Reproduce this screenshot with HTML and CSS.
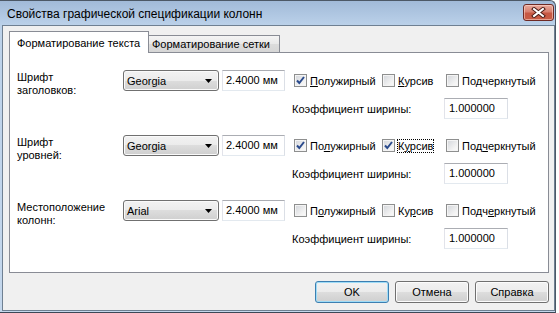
FILE: index.html
```html
<!DOCTYPE html>
<html>
<head>
<meta charset="utf-8">
<link rel="stylesheet" href="styles.css">
</head>
<body>
<div class="window">
  <div class="titlebar">
    <span class="title">Свойства графической спецификации колонн</span>
    <div class="close">
      <svg width="15" height="11" viewBox="0 0 15 11">
        <path d="M3 2 L12 9 M12 2 L3 9" stroke="#4a1a14" stroke-width="4" stroke-linecap="square" fill="none"/>
        <path d="M3 2 L12 9 M12 2 L3 9" stroke="#ffffff" stroke-width="2" stroke-linecap="square" fill="none"/>
      </svg>
    </div>
  </div>
  <div class="client">
    <div class="tabs">
      <div class="tab active">Форматирование текста</div>
      <div class="tab">Форматирование сетки</div>
    </div>
    <div class="pane">
      <div class="group">
        <div class="label">Шрифт<br>заголовков:</div>
        <div class="controls">
          <div class="r1">
            <div class="combo"><span>Georgia</span><svg class="arrow" width="7" height="4" viewBox="0 0 7 4"><path d="M0 0 H7 L3.5 4 Z" fill="#000"/></svg></div>
            <div class="textbox size">2.4000 мм</div>
            <div class="checks">
              <div class="chk w1"><span class="box checked"><svg width="11" height="11" viewBox="0 0 11 11"><path d="M2 5.5 L4.3 8 L9 2" stroke="#2a4a8c" stroke-width="2" fill="none"/></svg></span><span><u>П</u>олужирный</span></div>
              <div class="chk w2"><span class="box"></span><span><u>К</u>урсив</span></div>
              <div class="chk"><span class="box"></span><span>По<u>д</u>черкнутый</span></div>
            </div>
          </div>
          <div class="r2">
            <span class="coef">Коэффициент ширины:</span>
            <div class="textbox ratio">1.000000</div>
          </div>
        </div>
      </div>
      <div class="group">
        <div class="label">Шрифт<br>уровней:</div>
        <div class="controls">
          <div class="r1">
            <div class="combo"><span>Georgia</span><svg class="arrow" width="7" height="4" viewBox="0 0 7 4"><path d="M0 0 H7 L3.5 4 Z" fill="#000"/></svg></div>
            <div class="textbox size">2.4000 мм</div>
            <div class="checks">
              <div class="chk w1"><span class="box checked"><svg width="11" height="11" viewBox="0 0 11 11"><path d="M2 5.5 L4.3 8 L9 2" stroke="#2a4a8c" stroke-width="2" fill="none"/></svg></span><span>По<u>л</u>ужирный</span></div>
              <div class="chk w2"><span class="box checked"><svg width="11" height="11" viewBox="0 0 11 11"><path d="M2 5.5 L4.3 8 L9 2" stroke="#2a4a8c" stroke-width="2" fill="none"/></svg></span><span class="focus">К<u>у</u>рсив</span></div>
              <div class="chk"><span class="box"></span><span>Под<u>ч</u>еркнутый</span></div>
            </div>
          </div>
          <div class="r2">
            <span class="coef">Коэффициент ширины:</span>
            <div class="textbox ratio">1.000000</div>
          </div>
        </div>
      </div>
      <div class="group">
        <div class="label">Местоположение<br>колонн:</div>
        <div class="controls">
          <div class="r1">
            <div class="combo"><span>Arial</span><svg class="arrow" width="7" height="4" viewBox="0 0 7 4"><path d="M0 0 H7 L3.5 4 Z" fill="#000"/></svg></div>
            <div class="textbox size">2.4000 мм</div>
            <div class="checks">
              <div class="chk w1"><span class="box"></span><span>П<u>о</u>лужирный</span></div>
              <div class="chk w2"><span class="box"></span><span>Ку<u>р</u>сив</span></div>
              <div class="chk"><span class="box"></span><span>Подч<u>е</u>ркнутый</span></div>
            </div>
          </div>
          <div class="r2">
            <span class="coef">Коэффициент ширины:</span>
            <div class="textbox ratio">1.000000</div>
          </div>
        </div>
      </div>
    </div>
    <div class="buttons">
      <div class="btn default">OK</div>
      <div class="btn">Отмена</div>
      <div class="btn">Справка</div>
    </div>
  </div>
</div>
</body>
</html>
```

FILE: styles.css
```css
* { box-sizing: border-box; }
html, body { margin: 0; padding: 0; background: #ffffff; }
body {
  font-family: "Liberation Sans", Arial, sans-serif;
  font-size: 11px;
  color: #000;
}
u { text-decoration: underline; text-underline-offset: 1px; }

.window {
  width: 556px;
  height: 313px;
  display: flex;
  flex-direction: column;
  background: linear-gradient(#a1bad8, #bcd2ea 25px, #c4d7ec);
  border-top: 1px solid #4c5866;
  border-right: 1px solid #4c5866;
  border-bottom: 1px solid #3b4756;
  border-radius: 0 6px 0 0;
}

.titlebar {
  height: 24px;
  display: flex;
  align-items: center;
  justify-content: space-between;
  padding: 0 1px 0 7px;
}
.title {
  font-size: 12px;
  color: #000;
  margin-top: 2px;
}
.close {
  width: 31px;
  height: 17px;
  margin-top: -2px;
  border: 1px solid #6e2a24;
  border-radius: 3px;
  background: linear-gradient(#e9a99c, #d8806f 45%, #c75843 55%, #c85c45);
  box-shadow: inset 0 0 0 1px rgba(255, 220, 210, 0.55);
  display: flex;
  align-items: center;
  justify-content: center;
}

.client {
  flex: 1;
  margin: 0 0 1px 2px;
  border: 1px solid #6f8092;
  background: #f0f0f0;
  padding: 5px 5px 0 6px;
  display: flex;
  flex-direction: column;
}

.tabs {
  display: flex;
  align-items: flex-end;
  height: 21px;
}
.tab {
  height: 17px;
  width: 132px;
  margin-left: -1px;
  padding: 2px 0 0 3px;
  line-height: 13px;
  border: 1px solid #898c95;
  border-bottom: none;
  background: linear-gradient(#f4f4f4, #e8e8e8 50%, #dcdcdc 50%, #d6d6d6);
  white-space: nowrap;
}
.tab.active {
  position: relative;
  z-index: 1;
  margin-left: 0;
  width: 140px;
  height: 22px;
  margin-bottom: -1px;
  padding: 5px 0 0 7px;
  background: #ffffff;
}

.pane {
  height: 221px;
  border: 1px solid #898c95;
  background: #ffffff;
  padding: 17px 0 0 7px;
}

.group {
  display: flex;
  height: 65px;
}
.label {
  width: 106px;
  padding-top: 1px;
  line-height: 13px;
}
.controls {
  display: flex;
  flex-direction: column;
  gap: 7px;
}
.r1 {
  display: flex;
  align-items: center;
  height: 21px;
}
.combo {
  width: 96px;
  height: 21px;
  border: 1px solid #707070;
  border-radius: 3px;
  background: linear-gradient(#f2f2f2, #ebebeb 50%, #dddddd 50%, #cfcfcf);
  box-shadow: inset 0 0 0 1px #fafafa;
  display: flex;
  align-items: center;
  justify-content: space-between;
  padding: 1px 6px 0 3px;
}
.arrow { display: block; }
.textbox {
  height: 21px;
  border: 1px solid;
  border-color: #abadb3 #dbdfe6 #e3e9ef #e2e3ea;
  background: #ffffff;
  line-height: 19px;
  padding-left: 3px;
  white-space: nowrap;
}
.textbox.size { width: 63px; margin-left: 3px; }
.textbox.ratio { width: 64px; padding-left: 4px; }

.checks {
  display: flex;
  margin-left: 9px;
}
.chk {
  display: flex;
  align-items: center;
  gap: 3px;
  white-space: nowrap;
}
.chk.w1 { width: 88px; }
.chk.w2 { width: 64px; }
.box {
  width: 13px;
  height: 13px;
  border: 1px solid #8e8f8f;
  background: linear-gradient(135deg, #d2d5da, #f3f3f3 70%, #fbfbfb);
  box-shadow: inset 0 0 0 1px #f4f4f4;
  display: flex;
  align-items: center;
  justify-content: center;
}
.box svg { display: block; }
.focus {
  outline: 1px dotted #000;
  outline-offset: 0;
}

.r2 {
  display: flex;
  align-items: center;
  height: 21px;
  padding-left: 169px;
}
.coef { width: 152px; white-space: nowrap; }

.buttons {
  display: flex;
  justify-content: flex-end;
  gap: 6px;
  margin-top: 8px;
}
.btn {
  width: 74px;
  height: 22px;
  border: 1px solid #707070;
  border-radius: 3px;
  background: linear-gradient(#f2f2f2, #ebebeb 50%, #dddddd 50%, #cfcfcf);
  box-shadow: inset 0 0 0 1px #fcfcfc;
  display: flex;
  align-items: center;
  justify-content: center;
}
.btn.default {
  border-color: #3c7fb1;
  box-shadow: inset 0 0 0 1px #9fdcf7;
}
```
